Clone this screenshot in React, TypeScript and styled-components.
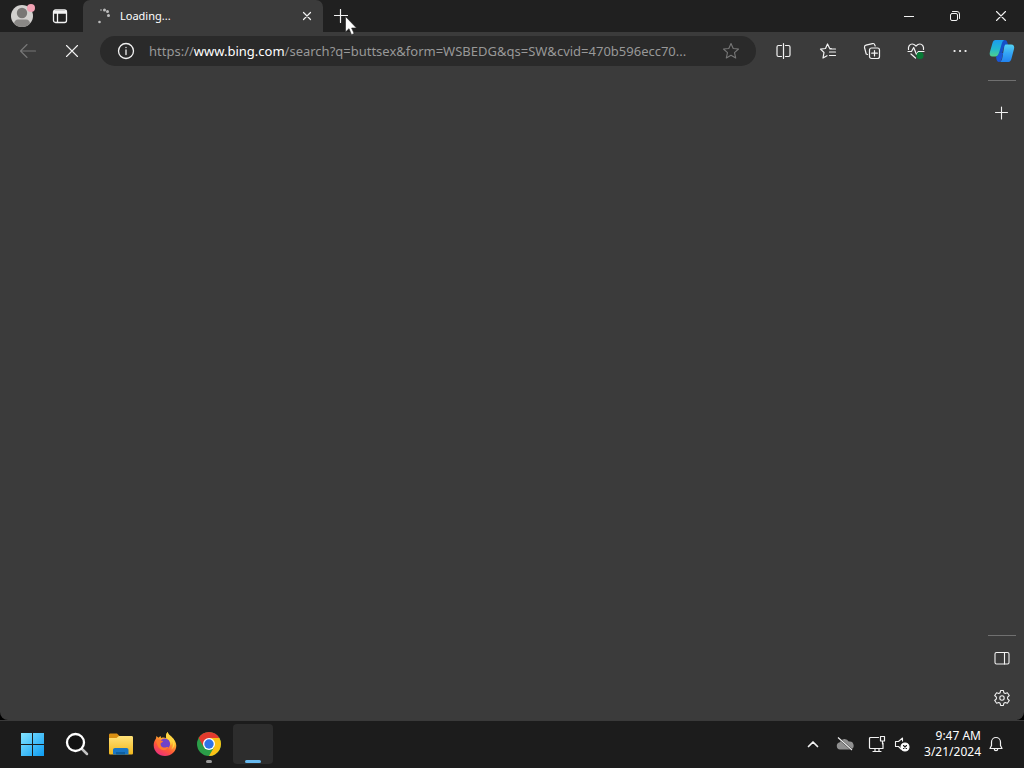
import React from "react";
import styled, { createGlobalStyle } from "styled-components";

const GlobalStyle = createGlobalStyle`
  * { box-sizing: border-box; }
  body {
    margin: 0;
    background: #000;
    color: #fff;
    font-family: "Noto Sans", "Open Sans", sans-serif;
    font-size: 12px;
  }
  button { font: inherit; color: inherit; }
`;

const Desktop = styled.div`
  display: flex;
  flex-direction: column;
  min-height: 100vh;
`;

const BrowserWindow = styled.main`
  flex: 1;
  display: flex;
  flex-direction: column;
  background: #3b3b3b;
  border-radius: 0 0 8px 8px;
  overflow: hidden;
`;

const TabStrip = styled.header`
  display: flex;
  height: 32px;
  background: #202020;
`;

const IconButton = styled.button<{ $w?: number; $h?: number; $dim?: boolean }>`
  display: flex;
  flex: none;
  align-items: center;
  justify-content: center;
  width: ${(p) => p.$w ?? 44}px;
  height: ${(p) => p.$h ?? 32}px;
  padding: 0;
  border: 0;
  background: transparent;
  color: ${(p) => (p.$dim ? "#777" : "#f2f2f2")};
  svg { display: block; }
`;

const Tab = styled.div`
  display: flex;
  align-items: center;
  width: 240px;
  padding: 0 6px 0 12px;
  gap: 7px;
  background: #3b3b3b;
  border-radius: 7px 7px 0 0;
  line-height: 16px;
`;

const TabTitle = styled.span`
  flex: 1;
  font-size: 11px;
`;

const ProfileArea = styled.div`
  display: flex;
  width: 83px;
  padding-left: 3px;
`;

const WindowControls = styled.div`
  display: flex;
  margin-left: auto;
`;

const NewTab = styled.div`
  position: relative;
  width: 36px;
`;

const Pointer = styled.svg`
  position: absolute;
  left: 22px;
  top: 16px;
  z-index: 2;
`;

const WindowBody = styled.div`
  flex: 1;
  display: flex;
`;

const Content = styled.div`
  flex: 1;
  min-width: 0;
`;

const Toolbar = styled.nav`
  display: flex;
  align-items: center;
  height: 38px;
  padding-left: 6px;
`;

const AddressBar = styled.div`
  flex: 1;
  min-width: 0;
  display: flex;
  align-items: center;
  height: 30px;
  margin: 0 6px;
  padding: 0 9px 0 10px;
  border-radius: 15px;
  background: #2a2a2a;
`;

const Url = styled.a`
  flex: 1;
  min-width: 0;
  overflow: hidden;
  text-overflow: ellipsis;
  white-space: nowrap;
  margin: 0 4px 0 7px;
  color: #989898;
  font-size: 13px;
  line-height: 20px;
  text-decoration: none;
  b { color: #fff; font-weight: 400; }
`;

const Sidebar = styled.aside`
  width: 42px;
  display: flex;
  flex-direction: column;
  align-items: center;
  padding: 0 2px 4px 0;
`;

const SidebarGroup = styled.div`
  display: flex;
  flex-direction: column;
  align-items: center;
  gap: 12px;
  padding-top: 10px;
`;

const Divider = styled.hr`
  width: 28px;
  height: 1px;
  margin: 0;
  border: 0;
  background: #707070;
`;

const Spacer = styled.div`
  flex: 1;
`;

const Taskbar = styled.footer`
  display: flex;
  align-items: center;
  height: 48px;
  padding: 0 13px;
  background: #1c1c1c;
  box-shadow: inset 0 1px #3a3a3a;
`;

const Apps = styled.div`
  display: flex;
  gap: 4px;
`;

const AppButton = styled.button<{ $active?: boolean; $running?: boolean }>`
  position: relative;
  display: flex;
  align-items: center;
  justify-content: center;
  width: 40px;
  height: 40px;
  padding: 0;
  border: 0;
  border-radius: 4px;
  background: ${(p) => (p.$active ? "#2d2d2d" : "transparent")};
  &::after {
    content: "";
    display: ${(p) => (p.$active || p.$running ? "block" : "none")};
    position: absolute;
    bottom: 1px;
    width: ${(p) => (p.$active ? 16 : 6)}px;
    height: 3px;
    border-radius: 2px;
    background: ${(p) => (p.$active ? "#66b8ee" : "#9a9a9a")};
  }
`;

const Tray = styled.div`
  display: flex;
  align-items: center;
  margin-left: auto;
`;

const Clock = styled.div`
  width: 70px;
  text-align: right;
  line-height: 16px;
  white-space: nowrap;
`;

const Line: React.FC<{ size?: number; width?: number; children: React.ReactNode }> = ({
  size = 18,
  width = 1.1,
  children,
}) => (
  <svg width={size} height={size} viewBox={`0 0 ${size} ${size}`} fill="none" stroke="currentColor" strokeWidth={width} strokeLinecap="round" strokeLinejoin="round" aria-hidden="true">
    {children}
  </svg>
);

const Profile = () => (
  <svg width="26" height="26" viewBox="0 0 26 26" aria-hidden="true">
    <defs>
      <clipPath id="face"><circle cx="12" cy="13" r="11" /></clipPath>
    </defs>
    <circle cx="12" cy="13" r="11" fill="#d2d0ce" />
    <g clipPath="url(#face)" fill="#797775">
      <circle cx="12" cy="10" r="5.2" />
      <path d="M4 24v-3c0-3 2-4.500 4-4.500h8c2.500 0 4 1.500 4 4.500v3z" fill="#8a8886" />
    </g>
    <circle cx="21" cy="5" r="4" fill="#f3a3b5" />
  </svg>
);

const Spinner = () => (
  <svg width="18" height="18" viewBox="0 0 18 18" fill="#bdbdbd" aria-hidden="true">
    <circle cx="6" cy="3" r="1" fill="#8a8a8a" />
    <circle cx="9.500" cy="3" r="1.500" />
    <circle cx="12.500" cy="4.500" r="1.500" />
    <circle cx="13.500" cy="8.500" r="1.500" />
    <circle cx="4.500" cy="15" r="1.300" />
  </svg>
);

const Copilot = () => (
  <svg width="26" height="26" viewBox="0 0 26 26" aria-hidden="true">
    <defs>
      <linearGradient id="cpA" x1="0" y1="0" x2="0" y2="1">
        <stop offset="0" stopColor="#1c9cf0" /><stop offset=".55" stopColor="#22b8cf" /><stop offset="1" stopColor="#4fd08a" />
      </linearGradient>
      <linearGradient id="cpB" x1="0" y1="0" x2="0" y2="1">
        <stop offset="0" stopColor="#54d2f2" /><stop offset=".5" stopColor="#35a6f5" /><stop offset="1" stopColor="#2183f0" />
      </linearGradient>
    </defs>
    <path d="M11 2h4.500c2 0 2.500 1 3 3l.8 2.500L15 9l-3.500 12H8z" fill="#1550c8" />
    <path d="M6.500 2H15c-1.200.8-1.700 2-2.200 3.500L10 15c-.7 2-1.500 3.500-3.500 3.500H3.500C1 18.500.2 16.500.9 14L3.500 5c.6-2 1.500-3 3-3z" fill="url(#cpA)" />
    <path d="M16.500 6.500h5.500c2.700 0 3.700 2 3 4.500L22.500 20.500c-.6 2-1.500 3.500-3 3.500H11c1.200-.8 1.700-2 2.200-3.500L15 10c.3-2 .8-3 1.500-3.500z" fill="url(#cpB)" />
    <path d="M7 18.500c1.800-.3 2.500-1.500 3-3.500h4.200l-1.400 5.500C12.300 22.300 11.500 24 10 24c-1.500 0-2-1-2.500-2.500z" fill="#1a56d6" />
  </svg>
);

const WindowsLogo = () => (
  <svg width="24" height="24" viewBox="0 0 24 24" aria-hidden="true">
    <defs>
      <linearGradient id="win" gradientUnits="userSpaceOnUse" x1="0" y1="0" x2="24" y2="24">
        <stop offset="0" stopColor="#86e5ff" /><stop offset="1" stopColor="#0a9af2" />
      </linearGradient>
    </defs>
    <path d="M0 1h11v11H0zM12 1h11v11H12zM0 13h11v11H0zM12 13h11v11H12z" fill="url(#win)" />
  </svg>
);

const SearchIcon = () => (
  <svg width="24" height="24" viewBox="0 0 24 24" fill="none" strokeLinecap="round" aria-hidden="true">
    <path d="M17 17l5 5" stroke="#c4c4c4" strokeWidth="2.500" />
    <circle cx="10.500" cy="10.500" r="8.500" fill="#121212" stroke="#fff" strokeWidth="2.300" />
  </svg>
);

const FolderIcon = () => (
  <svg width="24" height="24" viewBox="0 0 24 24" aria-hidden="true">
    <defs>
      <linearGradient id="folder" x1="0" y1="0" x2="0" y2="1">
        <stop offset="0" stopColor="#ffe27a" /><stop offset="1" stopColor="#f2b71c" />
      </linearGradient>
    </defs>
    <path d="M0 3c0-1 .5-1.500 1.500-1.500H8L10.500 4 9 7H0z" fill="#d98f12" />
    <path d="M0 6h7.500l2.500-2h12.500c1 0 1.500.5 1.500 1.500V21c0 1-.5 1.500-1.500 1.500h-21C.5 22.500 0 22 0 21z" fill="url(#folder)" />
    <path d="M4 22.500V18c0-1.200.8-2 2-2h11.500c1.200 0 2 .8 2 2v4.500z" fill="#1976c5" />
    <path d="M7 20h9v2.500H7z" fill="#0f5f9f" />
  </svg>
);

const FirefoxIcon = () => (
  <svg width="24" height="24" viewBox="0 0 24 24" aria-hidden="true">
    <defs>
      <linearGradient id="ff" x1=".8" y1="0" x2=".25" y2="1">
        <stop offset="0" stopColor="#fff44f" /><stop offset=".35" stopColor="#ffb02e" /><stop offset=".65" stopColor="#ff5a36" /><stop offset="1" stopColor="#e92b83" />
      </linearGradient>
    </defs>
    <path d="M14.500 0c.6 1.900 1.800 3.100 3.500 4.200l1 1.500c2.700 1.800 4.300 5 4.300 8C23.300 19.400 18.300 24 12 24S.7 19.400.7 13.300c0-2.900 1-5 2.300-6.800L3.400 4l2 1.800L7.500 4l.7 2c2.300-.7 3.800-.3 5 .2-.5-2.300.2-4.500 1.300-6.200z" fill="url(#ff)" />
    <circle cx="11.800" cy="11.800" r="5.300" fill="#7043c9" />
    <path d="M3 8c2-1 4-.5 5 .5l2 .5c0 1.200-1.500 1.700-2.300 2.200-.5 2 .8 4.300 3.800 4.300 1.500 0 2.500-.8 4-.5-1 2.500-3.700 3.600-6 3C6 17 4 14 3 8z" fill="#ff7a2d" />
    <path d="M13.500 6c2.500 1.500 4.500 4 4.300 7.500 1-1.500 1.200-3.500.8-5 1.800 2.500 1.800 6.500-.3 9 3.500-2 4.500-7 2-11C18 4 15.500 3 14.500 0c-1.500 1.800-1.900 4-1 6z" fill="#ffd541" />
  </svg>
);

const ChromeIcon = () => (
  <svg width="24" height="24" viewBox="0 0 24 24" aria-hidden="true">
    <circle cx="12" cy="12" r="12" fill="#2b9d48" />
    <path d="M1.610 6A12 12 0 0 1 22.390 6H12L6.800 15z" fill="#e33b2e" />
    <path d="M22.390 6A12 12 0 0 1 12 24l5.200-9L12 6z" fill="#fbc116" />
    <circle cx="12" cy="12" r="6" fill="#fff" />
    <circle cx="12" cy="12" r="4.700" fill="#2f73e8" />
  </svg>
);

export default function App() {
  return (
    <Desktop>
      <GlobalStyle />
      <BrowserWindow>
        <TabStrip>
          <ProfileArea>
            <IconButton $w={40} aria-label="Profile"><Profile /></IconButton>
            <IconButton $w={34} aria-label="Tab actions">
              <Line size={16} width={1.300}>
                <rect x="1.500" y="2" width="13" height="12.500" rx="2" />
                <path d="M2 3.500h12M2 5h12M5.500 5v9" />
              </Line>
            </IconButton>
          </ProfileArea>
          <Tab>
            <Spinner />
            <TabTitle>Loading...</TabTitle>
            <IconButton $w={20} $h={20} aria-label="Close tab">
              <Line size={10} width={1.200}><path d="M1.500 1.500l7 7M8.500 1.500l-7 7" /></Line>
            </IconButton>
          </Tab>
          <NewTab>
            <IconButton $w={36} aria-label="New tab">
              <Line size={14} width={1.200}><path d="M6.500 .5v13M.5 6.500h13" /></Line>
            </IconButton>
            <Pointer width="12" height="20" viewBox="0 0 12 20" aria-hidden="true">
              <path d="M.5.5v15.500l3.500-3.300 2.500 6 2.600-1.200-2.500-5.500h4.900z" fill="#fff" stroke="#222" strokeWidth=".6" />
            </Pointer>
          </NewTab>
          <WindowControls>
            <IconButton $w={46} aria-label="Minimize"><Line size={10}><path d="M0 5.500h10" /></Line></IconButton>
            <IconButton $w={46} aria-label="Restore">
              <Line size={10} width={1}>
                <rect x=".5" y="2.500" width="7" height="7" rx="1.500" />
                <path d="M2.500.5H7A2.500 2.500 0 0 1 9.500 3v4.500" />
              </Line>
            </IconButton>
            <IconButton $w={46} aria-label="Close"><Line size={10}><path d="M.5.5l9 9M9.500.5l-9 9" /></Line></IconButton>
          </WindowControls>
        </TabStrip>
        <WindowBody>
          <Content>
            <Toolbar>
              <IconButton $dim aria-label="Back"><Line><path d="M16.500 9h-15M8 2.500L1.500 9 8 15.500" /></Line></IconButton>
              <IconButton aria-label="Stop"><Line size={14}><path d="M1.500 1.500l11 11M12.500 1.500l-11 11" /></Line></IconButton>
              <AddressBar>
                <IconButton $w={32} $h={30} aria-label="Site information">
                  <Line width={1.300}><circle cx="9" cy="9" r="7.500" /><path d="M9 8v4.500M9 5.300v.3" /></Line>
                </IconButton>
                <Url href="#">
                  https://<b>www.bing.com</b>/search?q=buttsex&amp;form=WSBEDG&amp;qs=SW&amp;cvid=470b596ecc70...
                </Url>
                <IconButton $w={32} $h={30} $dim aria-label="Add to favorites">
                  <Line><path d="M9 1.500l2.200 5 5.300.5-4 3.600 1.200 5.400L9 13.200 4.300 16l1.200-5.400-4-3.600 5.300-.5z" /></Line>
                </IconButton>
              </AddressBar>
              <IconButton aria-label="Split screen">
                <Line width={1.200}><path d="M6.500 3.500h-3A1.500 1.500 0 0 0 2 5v8a1.500 1.500 0 0 0 1.500 1.500h3M10.500 3.500h3A1.500 1.500 0 0 1 15 5v8a1.500 1.500 0 0 1-1.500 1.500h-3M8.500 1.500v15" /></Line>
              </IconButton>
              <IconButton aria-label="Favorites">
                <Line width={1.200}><path d="M12.300 6.500l-1.700-.2L8.500 2l-2 4.500-5 .6L5 10.500 4 16l4-2.300M11 7h5.500M10.500 10h6M10.500 13.500h6" /></Line>
              </IconButton>
              <IconButton aria-label="Collections">
                <Line width={1.200}>
                  <rect x="6.500" y="6" width="10" height="10.500" rx="2" />
                  <path d="M11.500 8.500v5.500M8.700 11.200h5.600M4.500 12.500L3.200 12 1.500 5.500C1.300 4.300 1.700 3.500 3 3.200l6.500-1.600c1.200-.3 2 .2 2.300 1.400l.4 1" />
                </Line>
              </IconButton>
              <IconButton aria-label="Browser essentials">
                <Line width={1.200}>
                  <path d="M1.500 7.500c-.5-3 1.200-5.500 3.700-5.500C7 2 8 3 9 4c1-1 2-2 3.800-2 2.500 0 4.200 2.500 3.700 5.500M1 9.500h3.500l2.200-4 2.800 7 1.800-3H17M4 12l4.500 4" />
                  <circle cx="13" cy="13.500" r="3" fill="#087a36" stroke="#087a36" />
                </Line>
              </IconButton>
              <IconButton aria-label="Settings and more">
                <Line width={2.200}><path d="M3.500 9h.1M9 9h.1M14.500 9h.1" /></Line>
              </IconButton>
            </Toolbar>
          </Content>
          <Sidebar>
            <IconButton $w={40} $h={38} aria-label="Copilot"><Copilot /></IconButton>
            <SidebarGroup>
              <Divider />
              <IconButton $w={40} $h={40} aria-label="Add to sidebar">
                <Line size={14}><path d="M6.500 1v12M.5 6.500h12" /></Line>
              </IconButton>
            </SidebarGroup>
            <Spacer />
            <Divider />
            <IconButton $w={40} $h={44} aria-label="Toggle sidebar">
              <Line><rect x="2" y="3.500" width="14" height="11.500" rx="1.500" /><path d="M11.500 3.500V15" /></Line>
            </IconButton>
            <IconButton $w={40} $h={36} aria-label="Settings">
              <Line>
                <circle cx="9" cy="9" r="2.200" />
                <path d="M7.600 1.500h2.800l.5 2.300 1.300.7 2.200-.7 1.900 2.700-1.700 1.700v1.600l1.700 1.700-1.900 2.700-2.200-.7-1.300.7-.5 2.300H7.600l-.5-2.300-1.300-.7-2.200.7-1.900-2.700 1.700-1.700V8.200L1.700 6.500l1.900-2.700 2.200.7 1.300-.7z" />
              </Line>
            </IconButton>
          </Sidebar>
        </WindowBody>
      </BrowserWindow>
      <Taskbar>
        <Apps>
          <AppButton aria-label="Start"><WindowsLogo /></AppButton>
          <AppButton aria-label="Search"><SearchIcon /></AppButton>
          <AppButton aria-label="File Explorer"><FolderIcon /></AppButton>
          <AppButton aria-label="Firefox"><FirefoxIcon /></AppButton>
          <AppButton aria-label="Chrome" $running><ChromeIcon /></AppButton>
          <AppButton aria-label="Edge" $active />
        </Apps>
        <Tray>
          <IconButton $w={32} aria-label="Show hidden icons">
            <Line size={12} width={1.700}><path d="M1.500 8.500L6 4l4.500 4.500" /></Line>
          </IconButton>
          <IconButton $w={32} aria-label="OneDrive">
            <svg width="18" height="16" viewBox="0 0 18 16" aria-hidden="true">
              <path d="M4 13.500a3.700 3.700 0 0 1-.2-7.300 5 5 0 0 1 9-.7 4 4 0 0 1 1.500 8z" fill="#909090" />
              <path d="M3 2.500l13 11.500" stroke="#1c1c1c" strokeWidth="1.800" />
              <path d="M2 1.500l14 12.500" stroke="#eee" strokeWidth="1.200" />
            </svg>
          </IconButton>
          <IconButton $w={32} aria-label="Network">
            <Line width={1.200}><path d="M10.500 2.500h-8a1 1 0 0 0-1 1v9a1 1 0 0 0 1 1h12.500V8M7 13.500V16M11 13.500V16M5 16.500h8M12.500 1.500h4v4.500h-4zM14.500 6v3" /></Line>
          </IconButton>
          <IconButton $w={18} aria-label="Volume muted">
            <Line size={16}>
              <path d="M8.500 5V2L4.500 5.500h-3v5h3L7 13" />
              <circle cx="11" cy="11" r="4" fill="#fff" stroke="#fff" />
              <path d="M9.500 9.500l3 3M12.500 9.500l-3 3" stroke="#1c1c1c" />
            </Line>
          </IconButton>
          <Clock>
            <div>9:47 AM</div>
            <div>3/21/2024</div>
          </Clock>
          <IconButton $w={30} aria-label="Notifications">
            <Line size={16} width={1.200}><path d="M2 12.500L3.500 9.500V6a4.500 4.500 0 0 1 9 0v3.500l1.500 3zM6.300 13a1.700 1.700 0 0 0 3.400 0" /></Line>
          </IconButton>
        </Tray>
      </Taskbar>
    </Desktop>
  );
}
